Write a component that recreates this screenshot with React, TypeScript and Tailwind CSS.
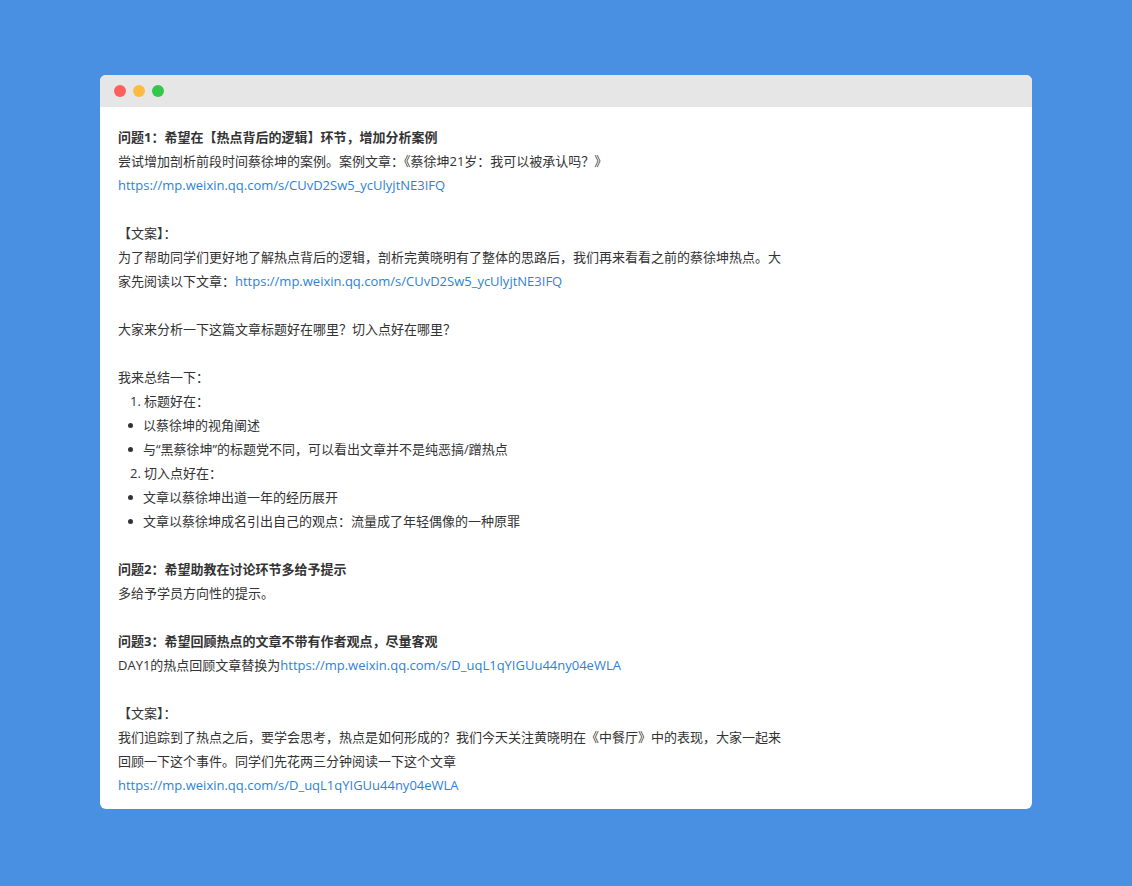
const A = ({ h }: { h: string }) => <a className="text-[#2f7fd8]">{h}</a>;
const L1 = "https://mp.weixin.qq.com/s/CUvD2Sw5_ycUlyjtNE3IFQ";
const L2 = "https://mp.weixin.qq.com/s/D_uqL1qYIGUu44ny04eWLA";

const Gap = () => <div className="h-6" />;
const Num = ({ n, t }: { n: number; t: string }) => (
  <div className="flex pl-[12px]"><span className="w-[14px]">{n}.</span><span>{t}</span></div>
);
const Dot = ({ t }: { t: string }) => (
  <div className="flex items-center pl-[10px]">
    <span className="mr-[10px] h-[5px] w-[5px] rounded-full bg-[#333]" />
    <span>{t}</span>
  </div>
);

export default function App() {
  return (
    <div className="min-h-screen bg-[#4a90e2] pt-[75px]">
      <div className="mx-auto ml-[100px] w-[932px] overflow-hidden rounded-md bg-white">
        <div className="flex h-8 items-center gap-[7px] bg-[#e6e6e6] pl-[14px]">
          <span className="h-3 w-3 rounded-full bg-[#fc605c]" />
          <span className="h-3 w-3 rounded-full bg-[#fdbc40]" />
          <span className="h-3 w-3 rounded-full bg-[#34c84a]" />
        </div>
        <div
          className="px-[18px] pt-[18px] pb-[12px] text-[13px] leading-6 text-[#333] whitespace-nowrap"
          style={{ fontFamily: '"Open Sans", "Noto Sans CJK SC", sans-serif' }}
        >
          <div className="font-bold">问题1：希望在【热点背后的逻辑】环节，增加分析案例</div>
          <div>尝试增加剖析前段时间蔡徐坤的案例。案例文章：《蔡徐坤21岁：我可以被承认吗？》</div>
          <div><A h={L1} /></div>
          <Gap />
          <div>【文案】：</div>
          <div>为了帮助同学们更好地了解热点背后的逻辑，剖析完黄晓明有了整体的思路后，我们再来看看之前的蔡徐坤热点。大</div>
          <div>家先阅读以下文章：<A h={L1} /></div>
          <Gap />
          <div>大家来分析一下这篇文章标题好在哪里？切入点好在哪里？</div>
          <Gap />
          <div>我来总结一下：</div>
          <Num n={1} t="标题好在：" />
          <Dot t="以蔡徐坤的视角阐述" />
          <Dot t="与“黑蔡徐坤”的标题党不同，可以看出文章并不是纯恶搞/蹭热点" />
          <Num n={2} t="切入点好在：" />
          <Dot t="文章以蔡徐坤出道一年的经历展开" />
          <Dot t="文章以蔡徐坤成名引出自己的观点：流量成了年轻偶像的一种原罪" />
          <Gap />
          <div className="font-bold">问题2：希望助教在讨论环节多给予提示</div>
          <div>多给予学员方向性的提示。</div>
          <Gap />
          <div className="font-bold">问题3：希望回顾热点的文章不带有作者观点，尽量客观</div>
          <div>DAY1的热点回顾文章替换为<A h={L2} /></div>
          <Gap />
          <div>【文案】：</div>
          <div>我们追踪到了热点之后，要学会思考，热点是如何形成的？我们今天关注黄晓明在《中餐厅》中的表现，大家一起来</div>
          <div>回顾一下这个事件。同学们先花两三分钟阅读一下这个文章</div>
          <div><A h={L2} /></div>
        </div>
      </div>
    </div>
  );
}
